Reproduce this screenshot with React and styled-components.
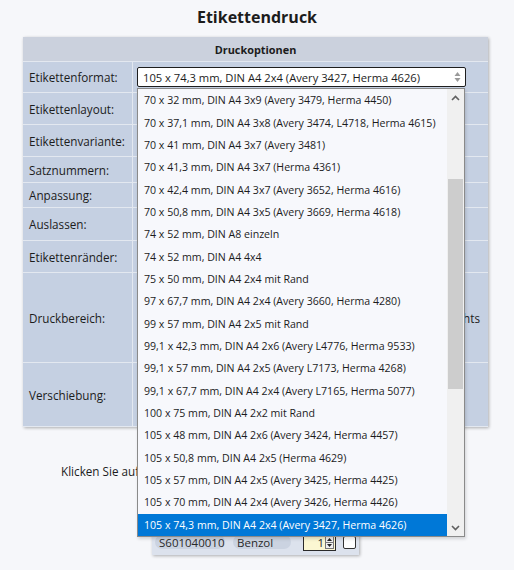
import React from 'react';
import styled, { createGlobalStyle } from 'styled-components';

const GlobalStyle = createGlobalStyle`
  html, body {
    margin: 0;
    padding: 0;
    background: #f6f7fa;
    font-family: "Open Sans", "Liberation Sans", sans-serif;
    color: #1c1c1c;
  }
`;

const Page = styled.div`
  width: 514px;
  height: 570px;
  overflow: hidden;
  display: flex;
  flex-direction: column;
  align-items: center;
`;

const Title = styled.h1`
  margin: 4px 0 0;
  height: 33px;
  font-size: 16px;
  font-weight: 700;
  line-height: 26px;
`;

const Panel = styled.div`
  position: relative;
  width: 465px;
  margin-left: -3px;
  background: #c5d0e2;
  box-shadow: 1px 1px 3px rgba(0, 0, 0, 0.3);
  display: grid;
  grid-template-columns: 110px 1fr;
`;

const Header = styled.div`
  grid-column: 1 / 3;
  height: 24px;
  background: #cbd1dd;
  border-bottom: 1px solid #e3e8f0;
  display: flex;
  align-items: center;
  justify-content: center;
  font-size: 10.9px;
  font-weight: 700;
`;

const Label = styled.div`
  height: ${p => p.h - 1}px;
  border-bottom: 1px solid #e3e8f0;
  border-right: 1px solid #e3e8f0;
  display: flex;
  align-items: center;
  padding-left: 6px;
  font-size: 11.7px;
`;

const Value = styled.div`
  height: ${p => p.h - 1}px;
  border-bottom: 1px solid #e3e8f0;
  display: flex;
  align-items: center;
  justify-content: ${p => (p.right ? 'flex-end' : 'flex-start')};
  padding: 0 8px 0 4px;
  font-size: 11.7px;
`;

const Select = styled.div`
  width: 318px;
  height: 18px;
  background: #fff;
  border: 1px solid #1e1e1e;
  border-radius: 2px;
  display: flex;
  align-items: center;
  justify-content: space-between;
  padding: 0 4px 0 5px;
  font-size: 11.2px;
  box-sizing: content-box;
`;

const Arrows = styled.svg`
  width: 7px;
  height: 12px;
`;

const Dropdown = styled.div`
  position: absolute;
  left: 114px;
  top: 51px;
  width: 326px;
  height: 447px;
  background: #f7f8fc;
  border: 1px solid #8a8a8a;
  box-shadow: 1px 2px 3px rgba(0, 0, 0, 0.15);
  display: flex;
  z-index: 5;
`;

const Options = styled.div`
  flex: 1;
  min-width: 0;
  overflow: hidden;
  display: flex;
  flex-direction: column;
`;

const Option = styled.div`
  height: 22.35px;
  flex-shrink: 0;
  display: flex;
  align-items: center;
  padding-left: 6px;
  font-size: 10.6px;
  white-space: nowrap;
  background: ${p => (p.selected ? '#0078d7' : 'transparent')};
  color: ${p => (p.selected ? '#fff' : '#1c1c1c')};
`;

const Scrollbar = styled.div`
  width: 17px;
  flex-shrink: 0;
  background: #f0f0f0;
  display: flex;
  flex-direction: column;
  align-items: center;
`;

const ScrollBtn = styled.div`
  height: 17px;
  display: flex;
  align-items: center;
  justify-content: center;
`;

const Track = styled.div`
  flex: 1;
  width: 15px;
  display: flex;
  flex-direction: column;
`;

const Thumb = styled.div`
  background: #cdcdcd;
  margin-top: ${p => p.top}px;
  height: ${p => p.h}px;
`;

const Hint = styled.div`
  margin-top: 36px;
  width: 392px;
  overflow: hidden;
  font-size: 11.7px;
  white-space: nowrap;
`;

const Card = styled.div`
  margin-top: 46px;
  margin-left: -3px;
  width: 201px;
  height: 26px;
  padding: 0 3px 4px;
  background: #dce2ed;
  box-shadow: 1px 1px 3px rgba(0, 0, 0, 0.3);
  display: flex;
  align-items: flex-end;
  font-size: 11.5px;
  color: #2a2a2a;
`;

const Chip = styled.div`
  height: 14px;
  padding: 0 4px;
  width: ${p => p.w}px;
  margin-right: ${p => p.mr}px;
  margin-bottom: 2px;
  border-radius: 7px;
  background: #cbd3e1;
  display: flex;
  align-items: center;
  box-sizing: border-box;
`;

const NumInput = styled.div`
  width: 33px;
  height: 17px;
  border: 1px solid #2a2a2a;
  background: #fbf7d2;
  display: flex;
  align-items: center;
  justify-content: flex-end;
  font-size: 11.5px;
  margin-right: 7px;
  box-sizing: border-box;
`;

const Spin = styled.div`
  width: 9px;
  height: 13px;
  margin: 0 1px;
  border: 1px solid #777;
  background: #f0f0f0;
  display: flex;
  flex-direction: column;
  box-sizing: border-box;
`;

const SpinHalf = styled.div`
  flex: 1;
  display: flex;
  align-items: center;
  justify-content: center;
  border-top: ${p => (p.bottom ? '1px solid #777' : 'none')};
`;

const Check = styled.div`
  width: 13px;
  height: 13px;
  border: 1px solid #333;
  border-radius: 2px;
  background: #fff;
  margin-bottom: 2px;
  box-sizing: border-box;
`;

const options = [
  '70 x 32 mm, DIN A4 3x9 (Avery 3479, Herma 4450)',
  '70 x 37,1 mm, DIN A4 3x8 (Avery 3474, L4718, Herma 4615)',
  '70 x 41 mm, DIN A4 3x7 (Avery 3481)',
  '70 x 41,3 mm, DIN A4 3x7 (Herma 4361)',
  '70 x 42,4 mm, DIN A4 3x7 (Avery 3652, Herma 4616)',
  '70 x 50,8 mm, DIN A4 3x5 (Avery 3669, Herma 4618)',
  '74 x 52 mm, DIN A8 einzeln',
  '74 x 52 mm, DIN A4 4x4',
  '75 x 50 mm, DIN A4 2x4 mit Rand',
  '97 x 67,7 mm, DIN A4 2x4 (Avery 3660, Herma 4280)',
  '99 x 57 mm, DIN A4 2x5 mit Rand',
  '99,1 x 42,3 mm, DIN A4 2x6 (Avery L4776, Herma 9533)',
  '99,1 x 57 mm, DIN A4 2x5 (Avery L7173, Herma 4268)',
  '99,1 x 67,7 mm, DIN A4 2x4 (Avery L7165, Herma 5077)',
  '100 x 75 mm, DIN A4 2x2 mit Rand',
  '105 x 48 mm, DIN A4 2x6 (Avery 3424, Herma 4457)',
  '105 x 50,8 mm, DIN A4 2x5 (Herma 4629)',
  '105 x 57 mm, DIN A4 2x5 (Avery 3425, Herma 4425)',
  '105 x 70 mm, DIN A4 2x4 (Avery 3426, Herma 4426)',
  '105 x 74,3 mm, DIN A4 2x4 (Avery 3427, Herma 4626)',
];

const rows = [
  { label: 'Etikettenformat:', h: 31 },
  { label: 'Etikettenlayout:', h: 32 },
  { label: 'Etikettenvariante:', h: 32 },
  { label: 'Satznummern:', h: 26 },
  { label: 'Anpassung:', h: 25 },
  { label: 'Auslassen:', h: 33 },
  { label: 'Etikettenränder:', h: 32 },
  { label: 'Druckbereich:', h: 90, value: 'von links nach rechts', right: true },
  { label: 'Verschiebung:', h: 64 },
];

const Chevron = ({ up }) => (
  <svg width="9" height="6" viewBox="0 0 9 6">
    <path
      d={up ? 'M1 5 L4.5 1.5 L8 5' : 'M1 1 L4.5 4.5 L8 1'}
      fill="none"
      stroke="#606060"
      strokeWidth="1.6"
    />
  </svg>
);

export default function App() {
  return (
    <Page>
      <GlobalStyle />
      <Title>Etikettendruck</Title>
      <Panel>
        <Header>Druckoptionen</Header>
        {rows.map((row, i) => (
          <React.Fragment key={row.label}>
            <Label h={row.h}>{row.label}</Label>
            <Value h={row.h} right={row.right}>
              {i === 0 ? (
                <Select>
                  <span>105 x 74,3 mm, DIN A4 2x4 (Avery 3427, Herma 4626)</span>
                  <Arrows viewBox="0 0 7 12">
                    <path d="M0.5 5 L3.5 1 L6.5 5 Z" fill="#9a9a9a" />
                    <path d="M0.5 7 L3.5 11 L6.5 7 Z" fill="#9a9a9a" />
                  </Arrows>
                </Select>
              ) : (
                row.value
              )}
            </Value>
          </React.Fragment>
        ))}
        <Dropdown>
          <Options>
            {options.map((o, i) => (
              <Option key={o} selected={i === options.length - 1}>
                {o}
              </Option>
            ))}
          </Options>
          <Scrollbar>
            <ScrollBtn>
              <Chevron up />
            </ScrollBtn>
            <Track>
              <Thumb top={73} h={210} />
            </Track>
            <ScrollBtn>
              <Chevron />
            </ScrollBtn>
          </Scrollbar>
        </Dropdown>
      </Panel>
      <Hint>Klicken Sie auf „Drucken“, um die Etiketten zu erstellen.</Hint>
      <Card>
        <Chip w={70} mr={8}>S601040010</Chip>
        <Chip w={58} mr={12}>Benzol</Chip>
        <NumInput>
          1
          <Spin>
            <SpinHalf>
              <svg width="5" height="3" viewBox="0 0 5 3"><path d="M0 3 L2.5 0 L5 3 Z" fill="#222" /></svg>
            </SpinHalf>
            <SpinHalf bottom>
              <svg width="5" height="3" viewBox="0 0 5 3"><path d="M0 0 L2.5 3 L5 0 Z" fill="#222" /></svg>
            </SpinHalf>
          </Spin>
        </NumInput>
        <Check />
      </Card>
    </Page>
  );
}
